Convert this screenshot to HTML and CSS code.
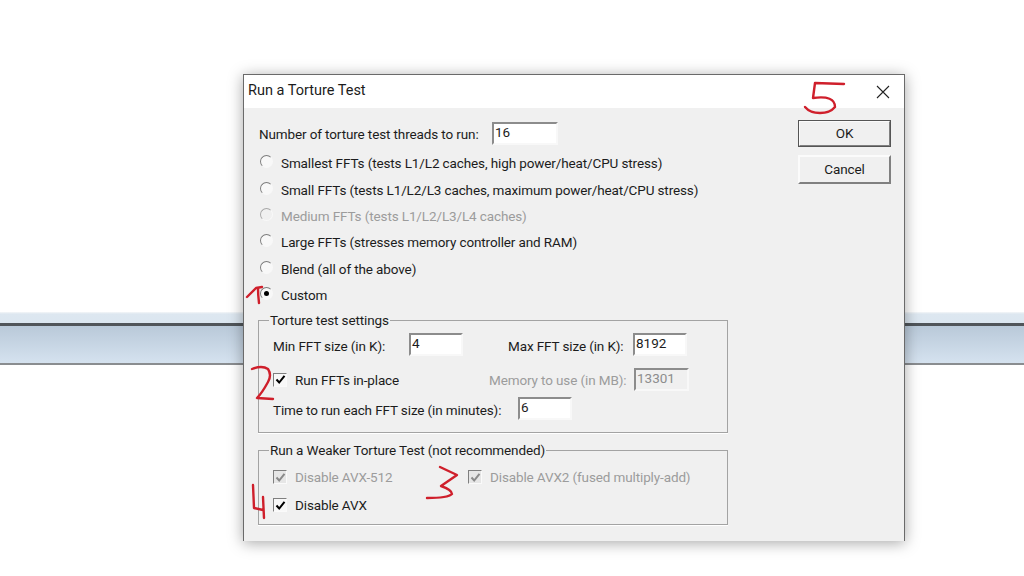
FILE: index.html
```html
<!DOCTYPE html>
<html lang="en">
<head>
<meta charset="utf-8">
<title>Run a Torture Test</title>
<link rel="stylesheet" href="styles.css">
</head>
<body>
<div class="strip"><div class="strip-top"></div><div class="strip-main"></div></div>
<section class="dialog">
  <header class="titlebar">
    <span class="title">Run a Torture Test</span>
    <svg class="close" width="14" height="14" viewBox="0 0 14 14"><path d="M1 1 13 13M13 1 1 13" stroke="#222" stroke-width="1.1" fill="none"/></svg>
  </header>
  <div class="content">
    <div class="main">
      <div class="threads">
        <span class="threads-label">Number of torture test threads to run:</span>
        <span class="field field-threads">16</span>
      </div>
      <div class="radios">
        <div class="radio-row"><span class="radio"></span><span>Smallest FFTs (tests L1/L2 caches, high power/heat/CPU stress)</span></div>
        <div class="radio-row"><span class="radio"></span><span>Small FFTs (tests L1/L2/L3 caches, maximum power/heat/CPU stress)</span></div>
        <div class="radio-row disabled"><span class="radio"></span><span>Medium FFTs (tests L1/L2/L3/L4 caches)</span></div>
        <div class="radio-row"><span class="radio"></span><span>Large FFTs (stresses memory controller and RAM)</span></div>
        <div class="radio-row"><span class="radio"></span><span>Blend (all of the above)</span></div>
        <div class="radio-row"><span class="radio checked"></span><span>Custom</span></div>
      </div>
      <fieldset class="group group-settings">
        <legend>Torture test settings</legend>
        <div class="set-row row-size">
          <span class="lbl-min">Min FFT size (in K):</span>
          <span class="field field-min">4</span>
          <span class="lbl-max">Max FFT size (in K):</span>
          <span class="field field-max">8192</span>
        </div>
        <div class="set-row row-mem">
          <span class="check"><svg width="11" height="11" viewBox="0 0 11 11"><path d="M1.5 5.5 4.2 8.5 9.5 1.8" fill="none" stroke="#000" stroke-width="2"/></svg></span>
          <span class="lbl-inplace">Run FFTs in-place</span>
          <span class="lbl-mem disabled">Memory to use (in MB):</span>
          <span class="field field-mem disabled-field">13301</span>
        </div>
        <div class="set-row row-time">
          <span class="lbl-time">Time to run each FFT size (in minutes):</span>
          <span class="field field-time">6</span>
        </div>
      </fieldset>
      <fieldset class="group group-weak">
        <legend>Run a Weaker Torture Test (not recommended)</legend>
        <div class="weak-row">
          <span class="check check-off"><svg width="11" height="11" viewBox="0 0 11 11"><path d="M1.5 5.5 4.2 8.5 9.5 1.8" fill="none" stroke="#8a8a8a" stroke-width="2"/></svg></span>
          <span class="lbl-512 disabled">Disable AVX-512</span>
          <span class="check check-off"><svg width="11" height="11" viewBox="0 0 11 11"><path d="M1.5 5.5 4.2 8.5 9.5 1.8" fill="none" stroke="#8a8a8a" stroke-width="2"/></svg></span>
          <span class="lbl-avx2 disabled">Disable AVX2 (fused multiply-add)</span>
        </div>
        <div class="weak-row row-avx">
          <span class="check"><svg width="11" height="11" viewBox="0 0 11 11"><path d="M1.5 5.5 4.2 8.5 9.5 1.8" fill="none" stroke="#000" stroke-width="2"/></svg></span>
          <span class="lbl-512">Disable AVX</span>
        </div>
      </fieldset>
    </div>
    <div class="buttons">
      <div class="btn btn-default">OK</div>
      <div class="btn btn-cancel">Cancel</div>
    </div>
  </div>
</section>
<svg class="marks" width="1024" height="576" viewBox="0 0 1024 576">
  <g fill="none" stroke="#cf1f2b" stroke-width="2.4" stroke-linecap="round" stroke-linejoin="round">
    <path d="M247 297 256 288 262 287M258 288Q258 295 259 303"/>
    <path d="M252 369Q262 365 268 369 272 375 268 382 262 393 257 398L273 399"/>
    <path d="M440 467 457 475 441 486Q452 490 452 494 448 498 427 498"/>
    <path d="M253 485 254 508 263 510M263 497 264 518"/>
    <path d="M844 84 815 83 813 98Q835 95 835 107 830 113 820 113 810 113 805 107"/>
  </g>
</svg>
</body>
</html>
```
FILE: styles.css
```css
* { box-sizing: border-box; }
html, body { margin: 0; height: 100%; background: #fff; overflow: hidden; }
body {
  font: 13.5px/18px Roboto, "Liberation Sans", sans-serif;
  letter-spacing: -.12px;
  white-space: nowrap;
  color: #1c1c1c;
}

.strip { padding-top: 312px; }
.strip-top { height: 11px; background: linear-gradient(#f4f6f8 0, #dde7f0 2px, #dbe6f0); }
.strip-main {
  height: 42px;
  border-top: 3px solid #50555a;
  border-bottom: 2px solid #8a8d90;
  background: linear-gradient(#b9c9d9, #d5e2ef);
}

.dialog {
  position: absolute; left: 243px; top: 74px;
  width: 662px; height: 467px;
  background: #f0f0f0;
  border: 1px solid #6a6a6a; border-bottom: 0;
  box-shadow: 0 2px 14px rgba(0, 0, 0, .35);
}
.titlebar {
  height: 33px; background: #fff;
  display: flex; align-items: center; justify-content: space-between;
  padding: 0 14px 0 4px;
}
.title { font-size: 14.5px; letter-spacing: 0; margin-top: -1px; }
.close { display: block; }

.content { display: flex; align-items: flex-start; }
.main { width: 484px; padding: 14px 0 0 14px; flex: none; }

.threads { display: flex; align-items: center; height: 22px; padding-left: 1px; }
.threads-label { width: 233px; padding-top: 2px; }

.field {
  display: block; height: 23px; line-height: 17px; padding: 0 1px;
  background: #fff; letter-spacing: 0;
  border: 2px solid; border-color: #8c8c8c #f8f8f8 #f8f8f8 #8c8c8c;
}
.field-threads { width: 66px; }
.field-min { width: 54px; }
.field-max { width: 54px; }
.field-mem { width: 55px; color: #8d8d8d; background: #f0f0f0; }
.field-time { width: 54px; }

.radios { padding-top: 6px; }
.radio-row { display: flex; align-items: center; height: 26.4px; }
.radio {
  width: 13px; height: 13px; margin: -3px 8px 0 2px; border-radius: 50%;
  border: 1.5px solid; border-color: #7d7d7d #f8f8f8 #f8f8f8 #7d7d7d;
  background: #f8f8f8; position: relative; flex: none;
}
.radio.checked::after {
  content: ""; position: absolute; left: 2.5px; top: 2.5px;
  width: 5px; height: 5px; border-radius: 50%; background: #000;
}
.disabled { color: #9c9c9c; }
.disabled .radio { border-color: #a8a8a8 #f8f8f8 #f8f8f8 #a8a8a8; background: #f0f0f0; }

.group {
  margin: 0; padding: 0 0 0 14px; min-width: 0;
  border: 1px solid #a3a3a3; box-shadow: 0 1px 0 #fff;
}
.group legend { padding: 0 1px; margin-left: -4px; line-height: 18px; }
.group-settings { margin-top: 3px; height: 122px; padding-top: 4px; }
.group-weak { margin-top: 8px; height: 84px; padding-top: 8px; }

.set-row { display: flex; align-items: center; height: 23px; }
.row-size span:not(.field), .lbl-time { padding-top: 2px; }
.lbl-min { width: 136px; }
.lbl-max { width: 125px; margin-left: 45px; }
.row-mem { margin-top: 12px; }
.row-time { margin-top: 6px; }
.lbl-inplace { width: 194px; }
.lbl-mem { width: 145px; }
.lbl-time { width: 245px; }

.check {
  width: 14px; height: 14px; flex: none; margin-right: 8px;
  display: flex; align-items: center; justify-content: center;
  background: #f8f8f8;
  border: 1px solid; border-color: #7f7f7f #fafafa #fafafa #7f7f7f;
}
.check-off { background: #e6e6e6; }
.weak-row { display: flex; align-items: center; height: 20px; }
.row-avx { margin-top: 8px; }
.lbl-512 { width: 173px; }

.buttons { width: 93px; margin-left: 70px; padding-top: 12px; display: flex; flex-direction: column; gap: 8px; }
.btn {
  height: 27px; display: flex; align-items: center; justify-content: center;
  padding-bottom: 2px;
  background: #f0f0f0;
  border: 2px solid; border-color: #fbfbfb #808080 #808080 #fbfbfb;
}
.btn-cancel { height: 29px; }
.btn-default { outline: 1px solid #555; outline-offset: -1px; }

.marks { position: absolute; left: 0; top: 0; pointer-events: none; }
```
